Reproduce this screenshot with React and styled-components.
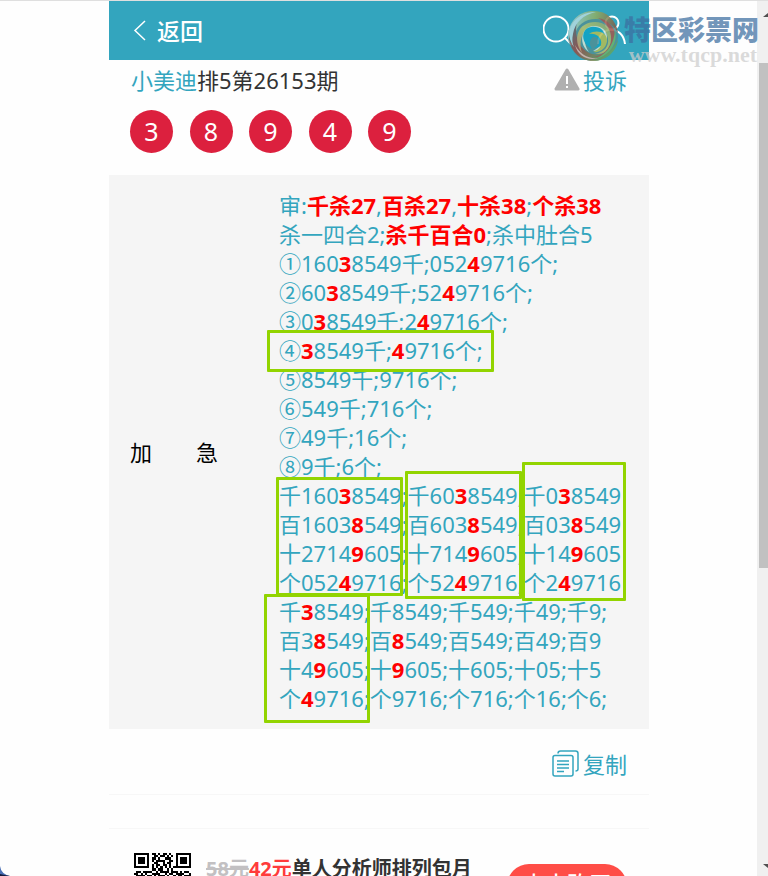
import React from "react";
import styled, { createGlobalStyle } from "styled-components";

const teal = "#33a5be";
const red = "#ff0000";
const lime = "#92d400";
const sans = `"Noto Sans", "Noto Sans CJK SC", sans-serif`;

const GlobalStyle = createGlobalStyle`
  * {
    box-sizing: border-box;
  }
  body {
    margin: 0;
    background-color: #fefefe;
    font-family: ${sans};
    font-size: 22px;
    color: #333;
  }
  button {
    font: inherit;
    border: none;
    background: none;
    padding: 0;
    cursor: pointer;
  }
  a {
    color: ${teal};
    text-decoration: none;
  }
`;

const Window = styled.div`
  position: relative;
  display: flex;
  height: 100vh;
  border-top: 1px solid #dfdfdf;
  overflow: hidden;
`;
const Viewport = styled.div`
  flex: 1;
  overflow: hidden;
`;
const Page = styled.main`
  max-width: 540px;
  margin: 0 auto;
`;
const Header = styled.header`
  display: flex;
  align-items: center;
  justify-content: space-between;
  height: 59px;
  padding: 0 22px;
  background-color: ${teal};
`;
const BackButton = styled.button`
  display: flex;
  align-items: center;
  gap: 10px;
  color: white;
  font-size: 23px;
  font-weight: 500;
  line-height: 30px;
`;
const Tools = styled.div`
  display: flex;
  gap: 20px;
`;
const IconButton = styled.button`
  display: flex;
`;
const TitleRow = styled.div`
  display: flex;
  justify-content: space-between;
  padding: 4px 22px 0;
  line-height: 32px;
`;
const Title = styled.h1`
  margin: 0;
  font-size: 22px;
  font-weight: 400;
`;
const Report = styled.a`
  display: flex;
  align-items: center;
  gap: 2px;
`;
const Balls = styled.div`
  display: flex;
  justify-content: space-between;
  width: 281px;
  margin: 14px 21px 22px;
`;
const Ball = styled.span`
  width: 43px;
  height: 43px;
  border-radius: 50%;
  background-color: #dc203e;
  color: white;
  font-size: 25px;
  line-height: 43px;
  text-align: center;
`;
const Panel = styled.section`
  position: relative;
  display: grid;
  grid-template-columns: 170px 1fr;
  align-items: center;
  padding: 16px 0;
  background-color: #f5f5f5;
  line-height: 29px;
`;
const Label = styled.div`
  padding-left: 21px;
  color: black;
`;
const Lines = styled.div`
  color: ${teal};
  white-space: nowrap;
`;
const Line = styled.div`
  height: 29px;
  b {
    color: ${red};
    font-weight: 700;
  }
`;
const Mark = styled.div`
  position: absolute;
  left: ${(p) => p.$x}px;
  top: ${(p) => p.$y}px;
  width: ${(p) => p.$w}px;
  height: ${(p) => p.$h}px;
  border: 3px solid ${lime};
  border-radius: 1px;
`;
const CopyRow = styled.div`
  display: flex;
  justify-content: flex-end;
  height: 66px;
  padding: 2px 22px 0;
  border-bottom: 1px solid #f7f7f7;
`;
const CopyButton = styled.button`
  display: flex;
  align-items: center;
  gap: 4px;
  height: 64px;
  color: ${teal};
`;
const Spacer = styled.div`
  height: 34px;
  border-bottom: 1px solid #f7f7f7;
`;
const Promo = styled.section`
  display: flex;
  align-items: flex-start;
  padding: 24px 22px 0 25px;
`;
const PromoText = styled.p`
  flex: 1;
  margin: 0 0 0 15px;
  font-size: 20px;
  font-weight: 700;
  line-height: 32px;
  del {
    color: #c2c0c2;
  }
  em {
    color: #ff3b3b;
    font-style: normal;
  }
`;
const BuyButton = styled.button`
  width: 120px;
  height: 44px;
  margin-top: 11px;
  border-radius: 22px;
  background-color: #ff4d47;
  color: white;
  font-size: 22px;
  font-weight: 500;
  line-height: 32px;
  padding-bottom: 6px;
`;
const ScrollTrack = styled.div`
  display: flex;
  flex-direction: column;
  justify-content: space-between;
  width: 11px;
  margin-left: -1px;
  padding: 12px 0 8px;
  background-color: #f0f0f0;
`;
const Thumb = styled.div`
  height: 505px;
  margin: 46px 0 auto 2px;
  background-color: #c1c1c1;
`;
const Arrow = styled.svg`
  display: block;
  margin-left: auto;
`;
const Watermark = styled.div`
  position: absolute;
  top: 8px;
  right: 9px;
  display: flex;
  align-items: flex-start;
  pointer-events: none;
`;
const Brand = styled.div`
  display: flex;
  flex-direction: column;
  align-items: flex-end;
  margin-left: 5px;
  padding-top: 2px;
`;
const BrandName = styled.span`
  color: rgba(60, 110, 160, 0.72);
  font-family: "Noto Sans CJK SC", sans-serif;
  font-size: 27px;
  font-weight: 900;
  line-height: 36px;
`;
const BrandUrl = styled.span`
  padding-right: 2px;
  color: rgba(205, 205, 205, 0.72);
  font-family: "Liberation Serif", serif;
  font-size: 22px;
  font-weight: 700;
  line-height: 16px;
`;
const Corner = styled.svg`
  position: absolute;
  left: 0;
  bottom: 0;
`;

// digits between asterisks are the hits
const rows = [
  "审:*千杀27*,*百杀27*,*十杀38*;*个杀38*",
  "杀一四合2;*杀千百合0*;杀中肚合5",
  "①160*3*8549千;052*4*9716个;",
  "②60*3*8549千;52*4*9716个;",
  "③0*3*8549千;2*4*9716个;",
  "④*3*8549千;*4*9716个;",
  "⑤8549千;9716个;",
  "⑥549千;716个;",
  "⑦49千;16个;",
  "⑧9千;6个;",
  "千160*3*8549;千60*3*8549;千0*3*8549",
  "百1603*8*549;百603*8*549;百03*8*549",
  "十2714*9*605;十714*9*605;十14*9*605",
  "个052*4*9716;个52*4*9716;个2*4*9716",
  "千*3*8549;千8549;千549;千49;千9;",
  "百3*8*549;百*8*549;百549;百49;百9",
  "十4*9*605;十*9*605;十605;十05;十5",
  "个*4*9716;个9716;个716;个16;个6;",
];

const marks = [
  { x: 158, y: 155, w: 227, h: 42 },
  { x: 167, y: 302, w: 127, h: 119 },
  { x: 296, y: 296, w: 117, h: 128 },
  { x: 413, y: 287, w: 104, h: 139 },
  { x: 155, y: 419, w: 106, h: 129 },
];

const qr = [
  "11111110110101101001111111",
  "10000010011011010101000001",
  "10111010110100111001011101",
  "10111010101111001101011101",
  "10111010011001011001011101",
  "10000010101101101001000001",
  "11111110101010101011111111",
  "00000000110110010100000000",
  "01101111001011110111010110",
  "11010100111100101101111001",
  "01111011010111010010110111",
];

const renderLine = (text) =>
  text.split("*").map((part, i) => (i % 2 ? <b key={i}>{part}</b> : part));

const Logo = () => (
  <svg width="52" height="54" viewBox="0 0 52 54" opacity="0.85">
    <defs>
      <linearGradient id="outer" x1="0" y1="0.3" x2="1" y2="0.5">
        <stop offset="0" stopColor="#9cd0da" />
        <stop offset="0.5" stopColor="#8fae62" />
        <stop offset="1" stopColor="#7d5048" />
      </linearGradient>
      <linearGradient id="base" x1="0" y1="0" x2="1" y2="0.7">
        <stop offset="0" stopColor="#4f6f78" />
        <stop offset="0.45" stopColor="#9a4a42" />
        <stop offset="1" stopColor="#5fae62" />
      </linearGradient>
      <linearGradient id="arm" x1="0" y1="1" x2="1" y2="0">
        <stop offset="0" stopColor="#c98a6c" />
        <stop offset="0.5" stopColor="#b9c46a" />
        <stop offset="1" stopColor="#7fa070" />
      </linearGradient>
    </defs>
    <circle cx="26" cy="27" r="25" fill="#4f8f96" />
    <path d="M1 26C3 9 14 2 27 2c13 0 22 9 24 22-5-9-13-14-22-14C18 10 9 16 8 27c-1 7 2 13 6 18C6 41 1 34 1 26z" fill="url(#outer)" />
    <path d="M2 30c1-8 4-13 8-17-3 13 1 27 15 32 10 2 20-2 26-14C49 44 38 52 26 52 14 52 4 43 2 30z" fill="url(#base)" />
    <path d="M4 17C9 7 19 3 29 3 16 6 8 13 6 25c-1 5-1 9 1 13C2 31 1 24 4 17z" fill="#b5dbe1" />
    <path d="M15 44C5 30 11 13 28 13c10 0 18 7 18 16 0 11-8 17-18 16 10-2 14-8 13-15-1-8-7-13-14-12-11 1-16 13-12 26z" fill="url(#arm)" />
    <path d="M31 9c12 2 18 11 17 20-1 12-10 19-21 19 13-3 18-12 17-21-1-8-6-14-13-18z" fill="#a4574d" />
    <path d="M22 43C12 36 13 20 25 17c10-1 16 5 15 13-1 8-7 12-14 12 6-3 9-7 8-12-1-6-6-8-10-7-7 2-8 12-2 20z" fill="#d7e6d5" />
    <path d="M25 40c-11-5-12-20-1-22 8-1 14 3 14 10 0 7-5 11-11 11 5-3 6-6 4-9-2-3-5-3-7 0-2 4-1 7 1 10z" fill="#0fa3c4" />
    <path d="M22 25c7-5 18-2 18 6 0 8-7 13-14 12 6-2 9-6 8-11-1-5-6-8-12-7z" fill="#b5bd52" />
    <path d="M48 21c3 14-5 25-19 29 13-7 18-16 19-29z" fill="#69b56b" />
    <path d="M8 36c5 9 13 14 23 13-9 3-20-1-23-13z" fill="#dcb5ad" />
  </svg>
);

const QrCode = () => (
  <svg width="57" height="57" viewBox="0 0 26 26" shapeRendering="crispEdges">
    {qr.map((line, y) =>
      [...line].map((c, x) =>
        c === "1" ? <rect key={`${x}-${y}`} x={x} y={y} width="1" height="1" /> : null
      )
    )}
  </svg>
);

const App = () => {
  return (
    <Window>
      <GlobalStyle />
      <Viewport>
        <Page>
          <Header>
            <BackButton>
              <svg width="16" height="22" viewBox="0 0 16 22" fill="none" stroke="white" strokeWidth="1.5">
                <path d="M14 1L4 10.500L14 20" />
              </svg>
              返回
            </BackButton>
            <Tools>
              <IconButton aria-label="搜索">
                <svg width="32" height="32" viewBox="0 0 32 32" fill="none" stroke="white" strokeWidth="2">
                  <circle cx="13" cy="14" r="12.500" />
                  <path d="M22 23L29 30" />
                </svg>
              </IconButton>
              <IconButton aria-label="我的">
                <svg width="32" height="32" viewBox="0 0 32 32" fill="none" stroke="white" strokeWidth="2">
                  <circle cx="17" cy="8" r="6.500" />
                  <path d="M3 29C4 10 28 10 30 29" />
                </svg>
              </IconButton>
            </Tools>
          </Header>
          <TitleRow>
            <Title>
              <a href="#author">小美迪</a>排5第26153期
            </Title>
            <Report href="#report">
              <svg width="28" height="24" viewBox="0 0 28 24">
                <path d="M14 2L25 21H3z" fill="#b0b0b0" stroke="#b0b0b0" strokeWidth="3" strokeLinejoin="round" />
                <path d="M14 8V16M14 18V20" stroke="white" strokeWidth="2" />
              </svg>
              投诉
            </Report>
          </TitleRow>
          <Balls>
            {[3, 8, 9, 4, 9].map((n, i) => (
              <Ball key={i}>{n}</Ball>
            ))}
          </Balls>
          <Panel>
            <Label>加{"\u3000\u3000"}急</Label>
            <Lines>
              {rows.map((row) => (
                <Line key={row}>{renderLine(row)}</Line>
              ))}
            </Lines>
            {marks.map((m, i) => (
              <Mark key={i} $x={m.x} $y={m.y} $w={m.w} $h={m.h} />
            ))}
          </Panel>
          <CopyRow>
            <CopyButton>
              <svg width="27" height="27" viewBox="0 0 27 27" fill="none" stroke={teal} strokeWidth="1.5">
                <path d="M6 3.500Q6 1 8.500 1H23.500Q26 1 26 3.500V19Q26 21 23.500 21" />
                <rect x="1" y="5.500" width="20" height="20.500" rx="2" />
                <path d="M5 11H17M5 14.500H17M5 18H17M5 21.500H12" />
              </svg>
              复制
            </CopyButton>
          </CopyRow>
          <Spacer />
          <Promo>
            <QrCode />
            <PromoText>
              <del>58元</del>
              <em>42元</em>单人分析师排列包月
            </PromoText>
            <BuyButton>点击购买</BuyButton>
          </Promo>
        </Page>
      </Viewport>
      <ScrollTrack>
        <Arrow width="5" height="4" viewBox="0 0 5 4">
          <path d="M5 0V4H0z" fill="#505050" />
        </Arrow>
        <Thumb />
        <Arrow width="5" height="4" viewBox="0 0 5 4">
          <path d="M0 0H5V4z" fill="#505050" />
        </Arrow>
      </ScrollTrack>
      <Watermark>
        <Logo />
        <Brand>
          <BrandName>特区彩票网</BrandName>
          <BrandUrl>www.tqcp.net</BrandUrl>
        </Brand>
      </Watermark>
      <Corner width="10" height="10" viewBox="0 0 10 10">
        <path d="M0 0Q1 8 10 10H0z" fill="#4a6fb5" />
        <path d="M0 8Q4 9 10 10H0z" fill="#151a3a" />
      </Corner>
    </Window>
  );
};

export default App;
